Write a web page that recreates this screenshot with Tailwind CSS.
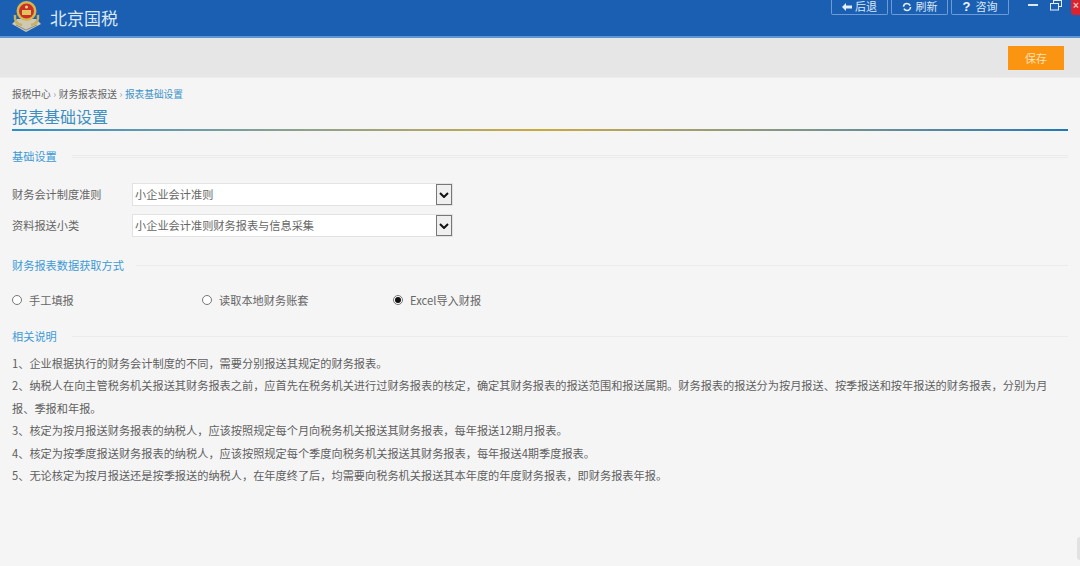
<!DOCTYPE html>
<html lang="zh-CN">
<head>
    <meta charset="UTF-8">
    <title>北京国税</title>
    <script src="https://cdn.jsdelivr.net/npm/@tailwindcss/browser@4"></script>
</head>
<body class="relative w-[1080px] h-[566px] overflow-hidden bg-[#f5f5f5] font-['Noto_Sans_CJK_SC','Liberation_Sans',sans-serif] text-[#666]">

    <!-- Top bar -->
    <header class="h-[38px] bg-[#1b5fb3] border-b-2 border-[#5f96d6] flex items-start overflow-hidden">
        <svg class="ml-[10px] w-[33px] h-[33px] shrink-0" viewBox="0 0 33 33">
            <path d="M2 24 L16 32 L31 24 L26 19 L7 19 Z" fill="#cfc9b4"/>
            <path d="M6 25 L16 30 L27 25" stroke="#8a8f8a" fill="none"/>
            <path d="M5 15 Q4 24 12 25 M28 15 Q29 24 21 25" stroke="#c9b05a" stroke-width="2.5" fill="none"/>
            <circle cx="16.500" cy="11" r="10" fill="#d8b648"/>
            <circle cx="16.500" cy="11" r="7.500" fill="#c8312b"/>
            <rect x="12" y="10" width="9" height="5" fill="#e3c35a"/>
            <circle cx="16.500" cy="7" r="1.500" fill="#f0d870"/>
        </svg>
        <h1 class="ml-[7px] mt-[7px] text-[17px] leading-[22px] text-[#dbe8f6]">北京国税</h1>

        <div class="ml-auto flex items-start gap-[3px]">
            <div class="w-[57px] h-[15px] pb-[1px] border border-t-0 border-[#6d9bd6] rounded-b-[2px] flex items-center justify-center gap-[3px] text-[11px] leading-none text-[#dbe8f6]">
                <svg class="w-[10px] h-[8px]" viewBox="0 0 10 8"><path d="M0 4 L4 0 V2.500 H10 V5.500 H4 V8 Z" fill="#e6eef8"/></svg>
                <span>后退</span>
            </div>
            <div class="w-[57px] h-[15px] pb-[1px] border border-t-0 border-[#6d9bd6] rounded-b-[2px] flex items-center justify-center gap-[4px] text-[11px] leading-none text-[#dbe8f6]">
                <svg class="w-[10px] h-[10px]" viewBox="0 0 10 10"><circle cx="5" cy="5" r="3.500" stroke="#e6eef8" stroke-width="1.600" fill="none" stroke-dasharray="9 2"/></svg>
                <span>刷新</span>
            </div>
            <div class="w-[58px] h-[15px] pb-[1px] border border-t-0 border-[#6d9bd6] rounded-b-[2px] flex items-center justify-center gap-[5px] text-[11px] leading-none text-[#dbe8f6]">
                <span class="font-['Liberation_Sans'] font-bold text-[13px] leading-none text-[#eef4fb]">?</span>
                <span>咨询</span>
            </div>
        </div>

        <!-- Window controls -->
        <div class="ml-[19px] mt-[4px] w-[10px] h-[2px] bg-[#dbe8f6]"></div>
        <svg class="ml-[12px] mt-0 w-[12px] h-[11px]" viewBox="0 0 12 11">
            <rect x="3.500" y="0.500" width="8" height="6" fill="none" stroke="#e6eef8"/>
            <rect x="0.500" y="3.500" width="8" height="6.500" fill="#1b5fb3" stroke="#e6eef8"/>
        </svg>
        <div class="ml-[9px] w-[9px] h-[15px] bg-[#d9232e] rounded-bl-[3px] text-[#f3c6c6] text-[10px] leading-[12px] pl-[2px] font-['Liberation_Sans'] font-bold">×</div>
    </header>

    <!-- Toolbar -->
    <div class="h-[40px] bg-[#e6e6e6] border-b border-[#ececec] flex justify-end items-start pr-[16px] pt-[8px]">
        <button class="w-[56px] h-[24px] bg-[#fb9410] text-[11px] text-[#fde3b8]">保存</button>
    </div>

    <main class="px-[12px]">
        <nav class="mt-[9px] h-[14px] flex items-center text-[9.700px] leading-[14px] text-[#666]">
            <span>报税中心</span>
            <span class="w-[8px] text-center text-[#999]">›</span>
            <span>财务报表报送</span>
            <span class="w-[8px] text-center text-[#999]">›</span>
            <span class="text-[#3d93c8]">报表基础设置</span>
        </nav>
        <h2 class="mt-[4px] h-[22px] text-[16px] leading-[22px] text-[#3d8fc0]">报表基础设置</h2>
        <div class="mt-[2px] h-[2px] bg-gradient-to-r from-[#2b8fc9] via-[#c9a93a] via-50% to-[#1f78b4]"></div>

        <!-- 基础设置 -->
        <div class="mt-[18px] flex items-center h-[14px]">
            <h3 class="text-[11.200px] leading-[14px] text-[#3d9ad6]">基础设置</h3>
            <div class="ml-[15px] flex-1 h-[3px] border-y border-[#ebebeb]"></div>
        </div>

        <div class="mt-[20px] flex flex-col gap-[8px] text-[11.200px]">
            <div class="flex items-center h-[23px]">
                <label class="w-[120px]">财务会计制度准则</label>
                <div class="w-[321px] h-[23px] bg-white border border-[#e2e2e2] flex items-center justify-between">
                    <span class="pl-[2px]">小企业会计准则</span>
                    <span class="w-[16px] h-[21px] bg-[#efefef] border border-[#777] flex items-center justify-center">
                        <svg class="w-[10px] h-[6px]" viewBox="0 0 10 6"><path d="M1 1 L5 5 L9 1" stroke="#111" stroke-width="2" fill="none"/></svg>
                    </span>
                </div>
            </div>
            <div class="flex items-center h-[23px]">
                <label class="w-[120px]">资料报送小类</label>
                <div class="w-[321px] h-[23px] bg-white border border-[#e2e2e2] flex items-center justify-between">
                    <span class="pl-[2px]">小企业会计准则财务报表与信息采集</span>
                    <span class="w-[16px] h-[21px] bg-[#efefef] border border-[#777] flex items-center justify-center">
                        <svg class="w-[10px] h-[6px]" viewBox="0 0 10 6"><path d="M1 1 L5 5 L9 1" stroke="#111" stroke-width="2" fill="none"/></svg>
                    </span>
                </div>
            </div>
        </div>

        <!-- 财务报表数据获取方式 -->
        <div class="mt-[21px] flex items-center h-[14px]">
            <h3 class="text-[11.200px] leading-[14px] text-[#3d9ad6]">财务报表数据获取方式</h3>
            <div class="ml-[12px] flex-1 h-[1px] bg-[#ebebeb]"></div>
        </div>

        <div class="mt-[20px] flex items-center h-[16px] text-[11.200px]">
            <div class="w-[190px] flex items-center gap-[7px]">
                <span class="w-[10px] h-[10px] rounded-full border border-[#777] bg-white"></span>
                <span>手工填报</span>
            </div>
            <div class="w-[191px] flex items-center gap-[7px]">
                <span class="w-[10px] h-[10px] rounded-full border border-[#777] bg-white"></span>
                <span>读取本地财务账套</span>
            </div>
            <div class="flex items-center gap-[7px]">
                <span class="w-[10px] h-[10px] rounded-full border border-[#777] bg-white flex items-center justify-center">
                    <span class="w-[6px] h-[6px] rounded-full bg-[#111]"></span>
                </span>
                <span>Excel导入财报</span>
            </div>
        </div>

        <!-- 相关说明 -->
        <div class="mt-[21px] flex items-center h-[14px]">
            <h3 class="text-[11.200px] leading-[14px] text-[#3d9ad6]">相关说明</h3>
            <div class="ml-[15px] flex-1 h-[1px] bg-[#ebebeb]"></div>
        </div>

        <div class="mt-[9px] max-w-[1048px] text-[11.200px] leading-[22.400px] text-[#5f5f5f]">
            <p>1、企业根据执行的财务会计制度的不同，需要分别报送其规定的财务报表。</p>
            <p>2、纳税人在向主管税务机关报送其财务报表之前，应首先在税务机关进行过财务报表的核定，确定其财务报表的报送范围和报送属期。财务报表的报送分为按月报送、按季报送和按年报送的财务报表，分别为月报、季报和年报。</p>
            <p>3、核定为按月报送财务报表的纳税人，应该按照规定每个月向税务机关报送其财务报表，每年报送12期月报表。</p>
            <p>4、核定为按季度报送财务报表的纳税人，应该按照规定每个季度向税务机关报送其财务报表，每年报送4期季度报表。</p>
            <p>5、无论核定为按月报送还是按季报送的纳税人，在年度终了后，均需要向税务机关报送其本年度的年度财务报表，即财务报表年报。</p>
        </div>
    </main>

    <!-- Edge of a floating widget, cut off by the screenshot -->
    <div class="absolute right-0 top-[537px] w-[3px] h-[23px] bg-[#e2e2e2] rounded-l-[3px]"></div>
</body>
</html>
